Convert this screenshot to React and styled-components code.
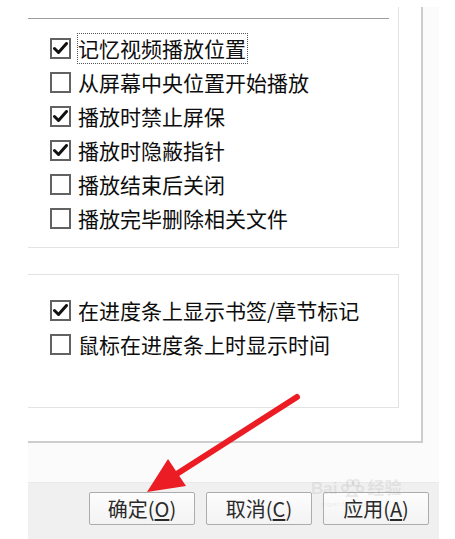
import React from "react";
import styled, { createGlobalStyle } from "styled-components";

const GlobalStyle = createGlobalStyle`
  html, body {
    margin: 0;
    background: #ffffff;
  }
  body {
    font-family: "Noto Sans CJK SC", "Microsoft YaHei", sans-serif;
  }
`;

const Page = styled.div`
  position: relative;
  width: 455px;
  height: 539px;
  padding: 7px 0 0 28px;
  box-sizing: border-box;
  overflow: hidden;
`;

const Dialog = styled.div`
  width: 411px;
  height: 532px;
  background: #fbfbfb;
  display: flex;
  flex-direction: column;
`;

const TabPage = styled.div`
  width: 395px;
  height: 436px;
  box-sizing: border-box;
  background: #ffffff;
  border-right: 2px solid #cdcdcd;
  border-bottom: 2px solid #cdcdcd;
  display: flex;
  flex-direction: column;
  gap: 26px;
`;

const Group = styled.div`
  width: 371px;
  box-sizing: border-box;
  border: 1px solid #e3e3e3;
  border-left: none;
  border-top: ${(p) => (p.$cut ? "none" : "1px solid #e3e3e3")};
  padding: ${(p) => (p.$cut ? "11px 0 12px 22px" : "18px 0 46px 22px")};
`;

const Separator = styled.div`
  width: 361px;
  height: 1px;
  margin-left: -22px;
  margin-bottom: 12px;
  background: #9d9d9d;
`;

const List = styled.div`
  display: flex;
  flex-direction: column;
`;

const Row = styled.label`
  height: 34px;
  display: flex;
  align-items: center;
`;

const Box = styled.span`
  width: 21px;
  height: 21px;
  box-sizing: border-box;
  border: 2px solid #626262;
  background: #ffffff;
  display: flex;
  align-items: center;
  justify-content: center;
  flex-shrink: 0;
`;

const Text = styled.span`
  margin-left: 6px;
  padding: 0 1px 0 0;
  font-size: 21px;
  line-height: 29px;
  color: #0d0d0d;
  white-space: nowrap;
  border: 1px dotted ${(p) => (p.$focus ? "#555555" : "transparent")};
`;

const ButtonBar = styled.div`
  margin-top: 39px;
  flex: 1;
  background: #f0f0f0;
  border-top: 1px solid #e9e9e9;
  display: flex;
  justify-content: flex-end;
  align-items: flex-start;
  gap: 11px;
  padding: 9px 10px 0 0;
`;

const Button = styled.button`
  width: 106px;
  height: 33px;
  box-sizing: border-box;
  border: 1px solid #acacac;
  border-radius: 2px;
  background: linear-gradient(#fdfdfd, #f3f3f3);
  font-family: "Noto Sans CJK SC", "Microsoft YaHei", sans-serif;
  font-size: 20px;
  color: #2a2a2a;
  padding: 0;
  display: flex;
  align-items: center;
  justify-content: center;

  u {
    text-decoration: underline;
    text-underline-offset: 2px;
  }
`;

const Watermark = styled.div`
  position: absolute;
  left: 311px;
  top: 474px;
  display: flex;
  align-items: flex-end;
  gap: 3px;
  color: rgba(170, 170, 170, 0.22);
  font-family: "Liberation Sans", sans-serif;
  font-size: 17px;
  font-weight: bold;
  pointer-events: none;

  small {
    position: absolute;
    left: 10px;
    top: 27px;
    font-size: 6px;
    font-weight: normal;
  }
`;

const ArrowLayer = styled.svg`
  position: absolute;
  left: 0;
  top: 0;
  pointer-events: none;
`;

const Check = () => (
  <svg width="15" height="13" viewBox="0 0 15 13">
    <path d="M1.5 6.5 L5.5 10.5 L13.5 1.5" fill="none" stroke="#111" strokeWidth="3" strokeLinecap="round" strokeLinejoin="round" />
  </svg>
);

const Option = ({ checked, focus, children }) => (
  <Row>
    <Box>{checked && <Check />}</Box>
    <Text $focus={focus}>{children}</Text>
  </Row>
);

const playback = [
  { label: "记忆视频播放位置", checked: true, focus: true },
  { label: "从屏幕中央位置开始播放", checked: false },
  { label: "播放时禁止屏保", checked: true },
  { label: "播放时隐蔽指针", checked: true },
  { label: "播放结束后关闭", checked: false },
  { label: "播放完毕删除相关文件", checked: false },
];

const progress = [
  { label: "在进度条上显示书签/章节标记", checked: true },
  { label: "鼠标在进度条上时显示时间", checked: false },
];

const App = () => (
  <>
    <GlobalStyle />
    <Page>
      <Dialog>
        <TabPage>
          <Group $cut>
            <Separator />
            <List>
              {playback.map((o) => (
                <Option key={o.label} checked={o.checked} focus={o.focus}>
                  {o.label}
                </Option>
              ))}
            </List>
          </Group>
          <Group>
            <List>
              {progress.map((o) => (
                <Option key={o.label} checked={o.checked}>
                  {o.label}
                </Option>
              ))}
            </List>
          </Group>
        </TabPage>
        <ButtonBar>
          <Button>确定(<u>O</u>)</Button>
          <Button>取消(<u>C</u>)</Button>
          <Button>应用(<u>A</u>)</Button>
        </ButtonBar>
      </Dialog>
      <Watermark>
        <span>Bai</span>
        <svg width="24" height="20" viewBox="0 0 24 20">
          <g fill="none" stroke="currentColor" strokeWidth="2">
            <circle cx="5" cy="9" r="3" />
            <circle cx="10" cy="4" r="3" />
            <circle cx="16" cy="4" r="3" />
            <circle cx="20" cy="10" r="3" />
            <path d="M7 17 Q12 9 17 17 Z" />
          </g>
        </svg>
        <span style={{ fontFamily: "Noto Sans CJK SC, sans-serif" }}>经验</span>
        <small>jingyan.baidu.com</small>
      </Watermark>
      <ArrowLayer width="455" height="539" viewBox="0 0 455 539">
        <line x1="297" y1="397" x2="172" y2="477" stroke="#ec1c24" strokeWidth="6" strokeLinecap="round" />
        <polygon points="147,492 168,459 186,486" fill="#ec1c24" />
      </ArrowLayer>
    </Page>
  </>
);

export default App;
